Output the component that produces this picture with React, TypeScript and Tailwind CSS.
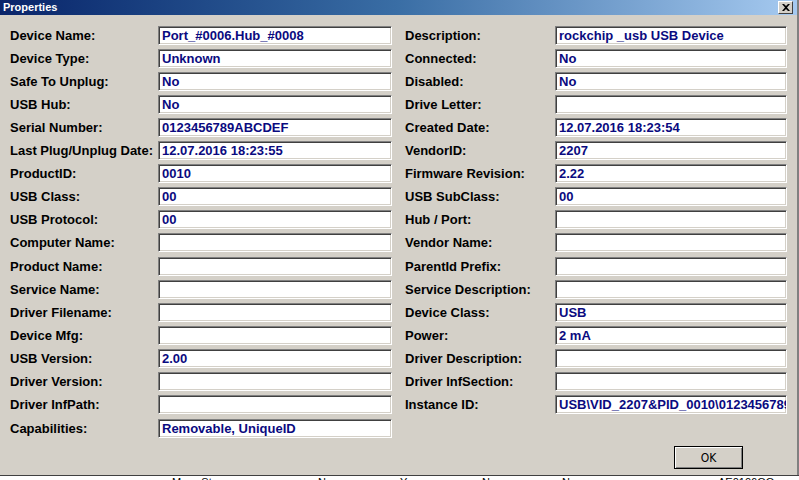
import React from "react";

const left: [string, string][] = [
  ["Device Name:", "Port_#0006.Hub_#0008"],
  ["Device Type:", "Unknown"],
  ["Safe To Unplug:", "No"],
  ["USB Hub:", "No"],
  ["Serial Number:", "0123456789ABCDEF"],
  ["Last Plug/Unplug Date:", "12.07.2016 18:23:55"],
  ["ProductID:", "0010"],
  ["USB Class:", "00"],
  ["USB Protocol:", "00"],
  ["Computer Name:", ""],
  ["Product Name:", ""],
  ["Service Name:", ""],
  ["Driver Filename:", ""],
  ["Device Mfg:", ""],
  ["USB Version:", "2.00"],
  ["Driver Version:", ""],
  ["Driver InfPath:", ""],
  ["Capabilities:", "Removable, UniqueID"],
];

const right: [string, string][] = [
  ["Description:", "rockchip _usb USB Device"],
  ["Connected:", "No"],
  ["Disabled:", "No"],
  ["Drive Letter:", ""],
  ["Created Date:", "12.07.2016 18:23:54"],
  ["VendorID:", "2207"],
  ["Firmware Revision:", "2.22"],
  ["USB SubClass:", "00"],
  ["Hub / Port:", ""],
  ["Vendor Name:", ""],
  ["ParentId Prefix:", ""],
  ["Service Description:", ""],
  ["Device Class:", "USB"],
  ["Power:", "2 mA"],
  ["Driver Description:", ""],
  ["Driver InfSection:", ""],
  ["Instance ID:", "USB\\VID_2207&PID_0010\\0123456789ABCDEF"],
];

function Field({ value }: { value: string }) {
  return (
    <div className="h-[19px] bg-white border border-t-[#808080] border-l-[#808080] border-b-white border-r-white shadow-[inset_1px_1px_0_#404040,inset_-1px_-1px_0_#d4d0c8] pl-[3px] overflow-hidden whitespace-nowrap text-[#0a0a80] leading-[17px]">
      {value}
    </div>
  );
}

function Column({ rows, labelW, fieldW }: { rows: [string, string][]; labelW: string; fieldW: string }) {
  return (
    <div className="flex flex-col gap-[4px]">
      {rows.map(([l, v], i) => (
        <div key={l} className={`flex items-center h-[19px] ${i === 10 || i === 17 ? "mt-[1px]" : ""}`}>
          <div className={`${labelW} text-black whitespace-nowrap`}>{l}</div>
          <div className={fieldW}>
            <Field value={v} />
          </div>
        </div>
      ))}
    </div>
  );
}

export default function App() {
  return (
    <div
      className="w-[799px] h-[480px] bg-white relative overflow-hidden font-bold text-[13px]"
      style={{ fontFamily: '"Liberation Sans", Arial, sans-serif' }}
    >
      <div className="h-[476px] bg-[#d4d0c8] border-r-2 border-r-[#808080] flex flex-col">
        <div className="h-[15px] flex items-center justify-between bg-gradient-to-r from-[#0a246a] via-[#3a6ea5] to-[#a6caf0] pl-[3px] pr-[4px]">
          <span className="text-white text-[11px] leading-none">Properties</span>
          <div className="w-[15px] h-[13px] bg-[#d4d0c8] border border-t-white border-l-white border-b-[#404040] border-r-[#404040] flex items-center justify-center">
            <svg width="8" height="7" viewBox="0 0 8 7">
              <path d="M0 0h2l2 2 2-2h2L5 3.5 8 7H6L4 5 2 7H0l3-3.5z" fill="black" />
            </svg>
          </div>
        </div>
        <div className="flex pl-[10px] pt-[11px]">
          <Column rows={left} labelW="w-[148px]" fieldW="w-[234px]" />
          <div className="w-[13px]" />
          <Column rows={right} labelW="w-[150px]" fieldW="w-[232px]" />
        </div>
        <div className="flex-1 flex items-end justify-end pr-[54px] pb-[7px]">
          <div className="w-[69px] h-[23px] border border-black bg-[#d4d0c8] shadow-[inset_1px_1px_0_#ffffff,inset_-1px_-1px_0_#808080] flex items-center justify-center font-normal text-[12px]" style={{ fontFamily: '"DejaVu Sans Condensed", "DejaVu Sans", sans-serif' }}>
            OK
          </div>
        </div>
      </div>
      <div className="h-[1px] bg-[#404040] absolute top-[475px] left-0 right-0" />
      <div className="flex font-normal text-[11px] leading-none text-black pt-[1px]" style={{ fontFamily: '"Liberation Sans", Arial, sans-serif' }}>
        <span className="ml-[172px]">Mass Storage</span>
        <span className="ml-[78px]">No</span>
        <span className="ml-[68px]">Yes</span>
        <span className="ml-[64px]">No</span>
        <span className="ml-[66px]">No</span>
        <span className="ml-[142px]">AE0106OO</span>
      </div>
    </div>
  );
}
